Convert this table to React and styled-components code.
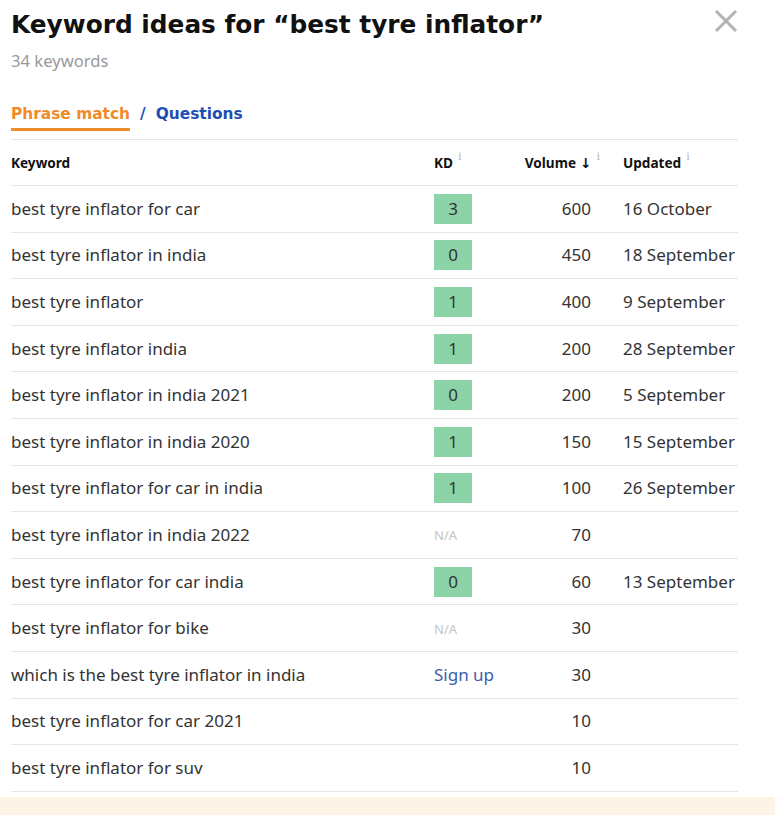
import React from "react";
import styled, { createGlobalStyle } from "styled-components";

const GlobalStyle = createGlobalStyle`
    body {
        margin: 0;
        background: #ffffff;
        font-family: "Noto Sans", sans-serif;
    }
`;

const Page = styled.div`
    width: 775px;
    height: 815px;
    display: flex;
    flex-direction: column;
    overflow: hidden;
`;

const Content = styled.div`
    flex: 1;
    padding: 8px 37px 0 11px;
    display: flex;
    flex-direction: column;
`;

const Header = styled.div`
    display: flex;
    justify-content: space-between;
    align-items: flex-start;
`;

const Title = styled.h1`
    margin: 0;
    font-family: "DejaVu Sans", sans-serif;
    font-size: 24.8px;
    font-weight: 700;
    line-height: 34px;
    color: #111111;
`;

const CloseButton = styled.button`
    border: none;
    background: none;
    padding: 0;
    margin: 2px 0 0 0;
    width: 24px;
    height: 24px;
    cursor: pointer;
`;

const Subtitle = styled.p`
    margin: 8px 0 0;
    font-size: 16.6px;
    line-height: 22px;
    color: #999999;
`;

const Tabs = styled.div`
    display: flex;
    align-items: center;
    gap: 10px;
    margin-top: 32px;
    font-family: "DejaVu Sans", sans-serif;
    font-size: 15.4px;
    font-weight: 700;
`;

const Tab = styled.span`
    color: ${(p) => (p.$active ? "#f08b2c" : "#1d4eb3")};
    padding-bottom: 4px;
    border-bottom: 3px solid ${(p) => (p.$active ? "#f08b2c" : "transparent")};
    line-height: 20px;
`;

const Slash = styled.span`
    color: #1d4eb3;
    padding-bottom: 7px;
    line-height: 20px;
`;

const Table = styled.div`
    margin-top: 8px;
    border-top: 1px solid #e6e6e6;
`;

const Row = styled.div`
    display: grid;
    grid-template-columns: 423px 90px 67px 1fr;
    align-items: center;
    height: ${(p) => (p.$head ? "45px" : "45.6px")};
    border-bottom: 1px solid #e6e6e6;
    font-size: ${(p) => (p.$head ? "13.6px" : "17px")};
    font-weight: ${(p) => (p.$head ? 700 : 400)};
    color: ${(p) => (p.$head ? "#111111" : "#333333")};
`;

const Cell = styled.div`
    white-space: nowrap;
    line-height: 20px;
    text-align: ${(p) => (p.$right ? "right" : "left")};
    padding-left: ${(p) => (p.$pad ? "32px" : "0")};
`;

const Info = styled.sup`
    font-family: "DejaVu Serif", serif;
    font-size: 11px;
    font-weight: 400;
    line-height: 0;
    color: #b8b8b8;
    margin-left: 5px;
    vertical-align: 8px;
    margin-right: ${(p) => (p.$hang ? "-9px" : "0")};
`;

const Arrow = styled.span`
    font-family: "DejaVu Sans", sans-serif;
    font-weight: 700;
    margin-left: 4px;
`;

const Badge = styled.span`
    display: inline-block;
    width: 38px;
    height: 30px;
    line-height: 30px;
    text-align: center;
    background: #8dd3a8;
    color: #333333;
    vertical-align: middle;
`;

const NotAvailable = styled.span`
    font-size: 13px;
    color: #c4c4c4;
`;

const SignUp = styled.a`
    color: #3a5cb0;
    text-decoration: none;
`;

const Footer = styled.div`
    height: 18px;
    background: #fdf3e7;
`;

const rows = [
    ["best tyre inflator for car", 3, 600, "16 October"],
    ["best tyre inflator in india", 0, 450, "18 September"],
    ["best tyre inflator", 1, 400, "9 September"],
    ["best tyre inflator india", 1, 200, "28 September"],
    ["best tyre inflator in india 2021", 0, 200, "5 September"],
    ["best tyre inflator in india 2020", 1, 150, "15 September"],
    ["best tyre inflator for car in india", 1, 100, "26 September"],
    ["best tyre inflator in india 2022", "na", 70, ""],
    ["best tyre inflator for car india", 0, 60, "13 September"],
    ["best tyre inflator for bike", "na", 30, ""],
    ["which is the best tyre inflator in india", "signup", 30, ""],
    ["best tyre inflator for car 2021", null, 10, ""],
    ["best tyre inflator for suv", null, 10, ""],
];

function Difficulty({ value }) {
    if (value === "na") return <NotAvailable>N/A</NotAvailable>;
    if (value === "signup") return <SignUp href="#">Sign up</SignUp>;
    if (value === null) return null;
    return <Badge>{value}</Badge>;
}

export default function App() {
    return (
        <Page>
            <GlobalStyle />
            <Content>
                <Header>
                    <Title>Keyword ideas for “best tyre inflator”</Title>
                    <CloseButton aria-label="Close">
                        <svg width="24" height="24" viewBox="0 0 24 24">
                            <path
                                d="M2 1 L22 21 M22 1 L2 21"
                                stroke="#b3b3b3"
                                strokeWidth="3"
                                fill="none"
                            />
                        </svg>
                    </CloseButton>
                </Header>
                <Subtitle>34 keywords</Subtitle>
                <Tabs>
                    <Tab $active>Phrase match</Tab>
                    <Slash>/</Slash>
                    <Tab>Questions</Tab>
                </Tabs>
                <Table>
                    <Row $head>
                        <Cell>Keyword</Cell>
                        <Cell>
                            KD<Info>i</Info>
                        </Cell>
                        <Cell $right>
                            Volume<Arrow>↓</Arrow>
                            <Info $hang>i</Info>
                        </Cell>
                        <Cell $pad>
                            Updated<Info>i</Info>
                        </Cell>
                    </Row>
                    {rows.map(([keyword, kd, volume, updated]) => (
                        <Row key={keyword}>
                            <Cell>{keyword}</Cell>
                            <Cell>
                                <Difficulty value={kd} />
                            </Cell>
                            <Cell $right>{volume}</Cell>
                            <Cell $pad>{updated}</Cell>
                        </Row>
                    ))}
                </Table>
            </Content>
            <Footer />
        </Page>
    );
}
